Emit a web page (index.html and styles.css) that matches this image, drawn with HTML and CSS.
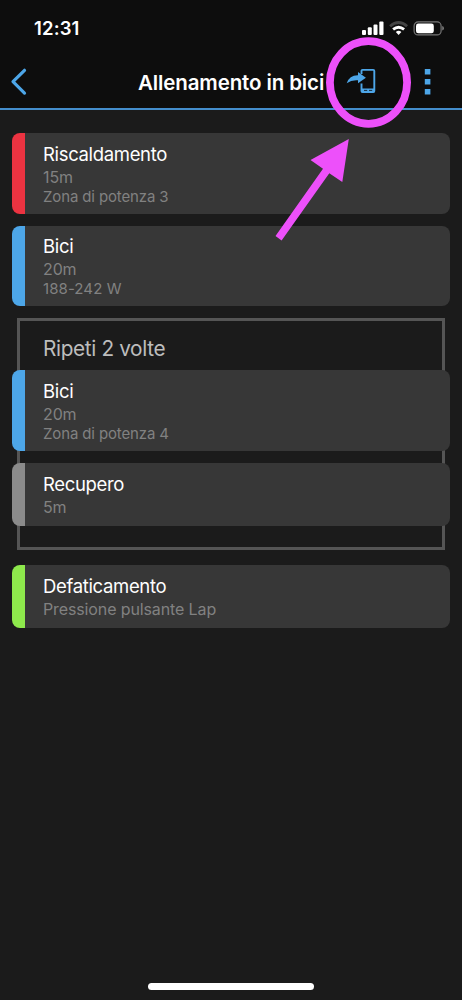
FILE: index.html
```html
<!DOCTYPE html>
<html lang="it">
<head>
<meta charset="utf-8">
<meta name="viewport" content="width=device-width">
<title>Allenamento in bici</title>
<link rel="stylesheet" href="styles.css">
</head>
<body>
<div class="screen">
  <header class="header">
    <div class="status">
      <span class="clock">12:31</span>
      <svg class="indicators" width="84" height="18" viewBox="0 0 84 18">
        <g fill="#fff">
          <rect x="2" y="10" width="4" height="5" rx="1"/>
          <rect x="7.800" y="7.300" width="4" height="7.700" rx="1"/>
          <rect x="13.500" y="4.500" width="4" height="10.500" rx="1"/>
          <rect x="19.300" y="1.500" width="4.200" height="13.500" rx="1"/>
        </g>
        <g transform="translate(.9 0)">
          <path d="M29.200 6.200Q37.700-1.200 46.200 6.200" fill="none" stroke="#444" stroke-width="2.800"/>
          <path d="M32.200 9.400Q37.700 5 43.200 9.400" fill="none" stroke="#fff" stroke-width="2.800"/>
          <path d="M34.900 12Q37.700 9.600 40.500 12L37.700 15Z" fill="#fff"/>
        </g>
        <rect x="54.100" y="1.900" width="27" height="13" rx="4" fill="none" stroke="#777" stroke-width="1.200"/>
        <rect x="56" y="3.600" width="17.800" height="9.700" rx="2.300" fill="#fff"/>
        <path d="M82.200 6Q84 6.400 84 8.300T82.200 10.600Z" fill="#777"/>
      </svg>
    </div>
    <div class="navbar">
      <svg class="back" width="18" height="28" viewBox="0 0 18 28"><path d="M14.500 2.300L3 13.700L14.500 25.100" fill="none" stroke="#4da6e8" stroke-width="3.200" stroke-linecap="round" stroke-linejoin="round"/></svg>
      <h1 class="title">Allenamento in bici</h1>
      <svg class="send" width="32" height="28" viewBox="0 0 32 28">
        <path d="M15.500 6.100V3Q15.500 1.900 16.600 1.900H27.200Q28.300 1.900 28.300 3V23Q28.300 24.100 27.200 24.100H16.600Q15.500 24.100 15.500 23V15.500" fill="none" stroke="#4da6e8" stroke-width="1.900"/>
        <path d="M15.500 20.500H28.300V24.300H15.500Z" fill="#4da6e8"/>
        <path d="M18 22.400H21.200M23 22.400H26.200" stroke="#0d0d0d" stroke-width=".8"/>
        <path d="M.7 15.200Q3.500 7 12 7.200V3.900L19.900 9.700L12 15.300V12.300Q5.500 11.700 .7 15.200Z" fill="#4da6e8"/>
      </svg>
      <svg class="more" width="8" height="28" viewBox="0 0 8 28" fill="#4da6e8"><path d="M.8 1h5.600v5.600h-5.600zM.8 11h5.600v5.600h-5.600zM.8 20.900h5.600v5.600h-5.600z"/></svg>
    </div>
  </header>
  <main class="steps">
    <section class="card warmup">
      <h2 class="name">Riscaldamento</h2>
      <p class="duration">15m</p>
      <p class="target">Zona di potenza 3</p>
    </section>
    <section class="card ride">
      <h2 class="name">Bici</h2>
      <p class="duration">20m</p>
      <p class="target watts">188-242 W</p>
    </section>
    <section class="repeat">
      <h2 class="repeat-title">Ripeti 2 volte</h2>
      <div class="repeat-steps">
        <section class="card ride">
          <h3 class="name">Bici</h3>
          <p class="duration">20m</p>
          <p class="target">Zona di potenza 4</p>
        </section>
        <section class="card short recovery">
          <h3 class="name">Recupero</h3>
          <p class="duration">5m</p>
        </section>
      </div>
    </section>
    <section class="card short cooldown">
      <h2 class="name">Defaticamento</h2>
      <p class="duration">Pressione pulsante Lap</p>
    </section>
  </main>
  <div class="home-bar"></div>
  <svg class="annotation" width="462" height="260" viewBox="0 0 462 260">
    <ellipse cx="368.500" cy="82.500" rx="38.600" ry="41.300" fill="none" stroke="#ed50fa" stroke-width="7.800"/>
    <path d="M348.800 139L342.300 182L329.300 173.300L281.600 240.500L275.500 236L323 168.700L310.500 160Z" fill="#ed50fa"/>
  </svg>
</div>
</body>
</html>
```
FILE: styles.css
```css
* { box-sizing: border-box; }
body { margin: 0; background: #1b1b1b; }
h1, h2, h3, p { margin: 0; font-weight: 400; white-space: nowrap; }
svg { display: block; }
.screen {
  position: relative;
  display: flex;
  flex-direction: column;
  height: 1000px;
  background: #1b1b1b;
  font-family: Inter, "Liberation Sans", sans-serif;
  overflow: hidden;
}
.header { height: 110px; background: #0d0d0d; border-bottom: 2px solid #438dcb; }
.status {
  display: flex;
  justify-content: space-between;
  height: 56px;
  padding: 20px 18px 0 34px;
}
.clock { font-size: 18.500px; line-height: 16px; font-weight: 600; color: #fff; letter-spacing: 0.150px; }
.navbar { display: flex; align-items: center; height: 52px; padding: 0 30px 0 10px; }
.title {
  margin-left: 110px;
  width: 187px;
  color: #fff;
  font-size: 20.500px;
  padding-top: 2px;
  line-height: 28px;
  font-weight: 600;
  letter-spacing: -0.120px;
}
.send { margin-left: 21px; }
.more { margin-left: auto; }
.steps { display: flex; flex-direction: column; padding: 23px 12px 0; }
.card {
  height: 80.500px;
  margin-bottom: 12px;
  padding: 8.500px 0 0 18px;
  border-left: 13px solid;
  border-radius: 8px;
  background: #373737;
}
.short { height: 63px; }
.warmup { padding-top: 9px; border-left-color: #ec3341; }
.ride { border-left-color: #4da6e8; }
.recovery { border-left-color: #8b8b8b; }
.cooldown { padding-top: 9px; border-left-color: #8ee94c; }
.repeat .card { padding-top: 9px; }
.name { color: #fff; font-size: 18.500px; line-height: 24px; letter-spacing: -0.340px; }
.duration { color: #818181; font-size: 16px; line-height: 22px; letter-spacing: -0.120px; }
.target { color: #818181; font-size: 15px; line-height: 17px; letter-spacing: -0.130px; }
.watts { letter-spacing: 0.080px; }
.repeat {
  height: 232px;
  margin: 0 5px 15px;
  border: 3px solid #555;
}
.repeat-title {
  height: 49px;
  padding: 14px 0 0 23px;
  color: #bdbdbd;
  font-size: 20.800px;
  line-height: 28px;
  letter-spacing: -0.370px;
}
.repeat-steps { margin: 0 -8px; }
.home-bar {
  width: 166px;
  height: 7px;
  margin: auto auto 10px 148px;
  border-radius: 4px;
  background: #fff;
}
.annotation { position: absolute; top: 0; left: 0; }
```
